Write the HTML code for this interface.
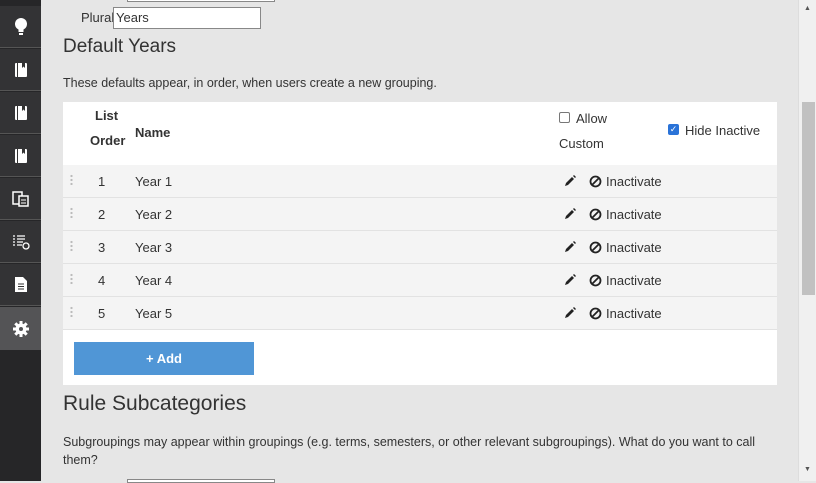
<!DOCTYPE html>
<html><head><style>
*{margin:0;padding:0;box-sizing:border-box}
body{width:816px;height:481px;overflow:hidden;background:#e6e6e6;font-family:"Liberation Sans",sans-serif;color:#333;position:relative}
.sb{position:absolute;left:0;top:0;width:41px;height:481px;background:#262628}
.it{position:absolute;left:0;width:41px;height:42px;background:#333335;border-bottom:1px solid #555;display:flex;align-items:center;justify-content:center;color:#fff}
.scroll{position:absolute;left:798px;top:0;width:18px;height:481px;background:#f0f0f0;border-left:1px solid #ddd}
.thumb{position:absolute;left:3px;top:102px;width:13px;height:193px;background:#c1c1c1}
.t{position:absolute;font-size:13px;white-space:nowrap}
.card{position:absolute;left:63px;top:102px;width:714px;height:283px;background:#fff}
.row{position:absolute;left:0;width:714px;height:33px;background:#f4f4f4;border-bottom:1px solid #e2e2e2;font-size:13px}
.row span{position:absolute;top:9px}
.row svg{position:absolute;top:10px}
.dots{position:absolute;left:7px;top:9px;width:3px;height:11px;background:radial-gradient(circle,#bbb 1px,transparent 1.3px) 0 0/3px 4px}
</style></head><body>
<div class="sb">
<div class="it" style="top:6px">
<svg width="14" height="18" viewBox="0 0 14 18"><circle cx="7" cy="6" r="6" fill="#fff"/><rect x="4.5" y="10" width="5" height="4" fill="#fff"/><rect x="5" y="15" width="4" height="2" fill="#fff"/></svg></div>
<div class="it" style="top:49px"><svg width="12" height="14"><rect x="0" y="0" width="12" height="14" rx="1" fill="#fff"/><rect x="2" y="0" width="1" height="14" fill="#333"/><path d="M7 0h3v5l-1.5-1.5L7 5z" fill="#333"/></svg></div>
<div class="it" style="top:92px"><svg width="12" height="14"><rect x="0" y="0" width="12" height="14" rx="1" fill="#fff"/><rect x="2" y="0" width="1" height="14" fill="#333"/><path d="M7 0h3v5l-1.5-1.5L7 5z" fill="#333"/></svg></div>
<div class="it" style="top:135px"><svg width="12" height="14"><rect x="0" y="0" width="12" height="14" rx="1" fill="#fff"/><rect x="2" y="0" width="1" height="14" fill="#333"/><path d="M7 0h3v5l-1.5-1.5L7 5z" fill="#333"/></svg></div>
<div class="it" style="top:178px"><svg width="18" height="16"><rect x="1" y="1" width="9" height="12" fill="none" stroke="#fff" stroke-width="1.5"/><rect x="7" y="5" width="9" height="10" fill="#333" stroke="#fff" stroke-width="1.5"/><path d="M9 9h5M9 12h5" stroke="#fff"/></svg></div>
<div class="it" style="top:221px"><svg width="18" height="16"><path d="M1 2h2M5 2h8M1 5h2M5 5h8M1 8h2M5 8h6M1 11h2M5 11h5" stroke="#fff" stroke-width="1.3"/><circle cx="14" cy="12" r="3" fill="none" stroke="#fff" stroke-width="1.3"/></svg></div>
<div class="it" style="top:264px"><svg width="12" height="15"><path d="M0 0h8l4 4v11H0z" fill="#fff"/><path d="M3 7h6M3 9.5h6M3 12h6" stroke="#333"/></svg></div>
<div class="it" style="top:307px;background:#545456;border:none;height:43px"><svg width="16" height="16" viewBox="0 0 16 16"><circle cx="8" cy="8" r="5.5" fill="#fff"/><path d="M8 0v16M0 8h16M2.3 2.3l11.4 11.4M13.7 2.3L2.3 13.7" stroke="#fff" stroke-width="3"/><circle cx="8" cy="8" r="2" fill="#545456"/></svg></div>
</div>
<div style="position:absolute;left:127px;top:-1px;width:148px;height:3px;border:1px solid #888;border-top:none;background:#fff"></div>
<div class="t" style="left:81px;top:10px;color:#333">Plural</div>
<div style="position:absolute;left:113px;top:7px;width:148px;height:22px;border:1px solid #888;background:#fff;font-size:13px;padding:2px 2px">Years</div>
<div class="t" style="left:63px;top:36px;font-size:19px;color:#333">Default Years</div>
<div class="t" style="left:63px;top:76px;font-size:12.5px">These defaults appear, in order, when users create a new grouping.</div>
<div class="card">
<div class="t" style="left:32px;top:6px;font-weight:bold">List</div>
<div class="t" style="left:27px;top:31px;font-weight:bold">Order</div>
<div class="t" style="left:72px;top:23px;font-weight:bold">Name</div>
<div style="position:absolute;left:496px;top:10px;width:11px;height:11px;border:1px solid #777;border-radius:2px"></div>
<div class="t" style="left:513px;top:9px">Allow</div>
<div class="t" style="left:496px;top:34px">Custom</div>
<div style="position:absolute;left:605px;top:22px;width:11px;height:11px;background:#2a73d8;border-radius:2px;color:#fff;font-size:9px;line-height:11px;text-align:center">✓</div>
<div class="t" style="left:622px;top:21px">Hide Inactive</div>
<div class="row" style="top:63px"><div class="dots"></div><span style="left:35px">1</span><span style="left:72px">Year 1</span><svg style="left:501px" width="12" height="12"><path d="M1 11l1-3 6-6 2 2-6 6z" fill="#222"/><path d="M9 1l1-1 2 2-1 1z" fill="#222"/></svg><svg style="left:526px" width="13" height="13"><circle cx="6.5" cy="6.5" r="5" fill="none" stroke="#222" stroke-width="1.8"/><path d="M3 10L10 3" stroke="#222" stroke-width="1.8"/></svg><span style="left:543px">Inactivate</span></div>
<div class="row" style="top:96px"><div class="dots"></div><span style="left:35px">2</span><span style="left:72px">Year 2</span><svg style="left:501px" width="12" height="12"><path d="M1 11l1-3 6-6 2 2-6 6z" fill="#222"/><path d="M9 1l1-1 2 2-1 1z" fill="#222"/></svg><svg style="left:526px" width="13" height="13"><circle cx="6.5" cy="6.5" r="5" fill="none" stroke="#222" stroke-width="1.8"/><path d="M3 10L10 3" stroke="#222" stroke-width="1.8"/></svg><span style="left:543px">Inactivate</span></div>
<div class="row" style="top:129px"><div class="dots"></div><span style="left:35px">3</span><span style="left:72px">Year 3</span><svg style="left:501px" width="12" height="12"><path d="M1 11l1-3 6-6 2 2-6 6z" fill="#222"/><path d="M9 1l1-1 2 2-1 1z" fill="#222"/></svg><svg style="left:526px" width="13" height="13"><circle cx="6.5" cy="6.5" r="5" fill="none" stroke="#222" stroke-width="1.8"/><path d="M3 10L10 3" stroke="#222" stroke-width="1.8"/></svg><span style="left:543px">Inactivate</span></div>
<div class="row" style="top:162px"><div class="dots"></div><span style="left:35px">4</span><span style="left:72px">Year 4</span><svg style="left:501px" width="12" height="12"><path d="M1 11l1-3 6-6 2 2-6 6z" fill="#222"/><path d="M9 1l1-1 2 2-1 1z" fill="#222"/></svg><svg style="left:526px" width="13" height="13"><circle cx="6.5" cy="6.5" r="5" fill="none" stroke="#222" stroke-width="1.8"/><path d="M3 10L10 3" stroke="#222" stroke-width="1.8"/></svg><span style="left:543px">Inactivate</span></div>
<div class="row" style="top:195px"><div class="dots"></div><span style="left:35px">5</span><span style="left:72px">Year 5</span><svg style="left:501px" width="12" height="12"><path d="M1 11l1-3 6-6 2 2-6 6z" fill="#222"/><path d="M9 1l1-1 2 2-1 1z" fill="#222"/></svg><svg style="left:526px" width="13" height="13"><circle cx="6.5" cy="6.5" r="5" fill="none" stroke="#222" stroke-width="1.8"/><path d="M3 10L10 3" stroke="#222" stroke-width="1.8"/></svg><span style="left:543px">Inactivate</span></div>
<div style="position:absolute;left:11px;top:240px;width:180px;height:33px;background:#5096d6;color:#fff;font-size:13px;font-weight:bold;text-align:center;line-height:33px">+ Add</div>
</div>
<div class="t" style="left:63px;top:392px;font-size:21px">Rule Subcategories</div>
<div class="t" style="left:63px;top:435px;font-size:12.5px">Subgroupings may appear within groupings (e.g. terms, semesters, or other relevant subgroupings). What do you want to call</div>
<div class="t" style="left:63px;top:453px;font-size:12.5px">them?</div>
<div style="position:absolute;left:127px;top:479px;width:148px;height:4px;border:1px solid #888;background:#fff"></div>
<div class="scroll"><div class="thumb"></div>
<div style="position:absolute;left:5px;top:5px;font-size:7px;color:#555">▲</div>
<div style="position:absolute;left:5px;top:466px;font-size:7px;color:#555">▼</div></div>
</body></html>
